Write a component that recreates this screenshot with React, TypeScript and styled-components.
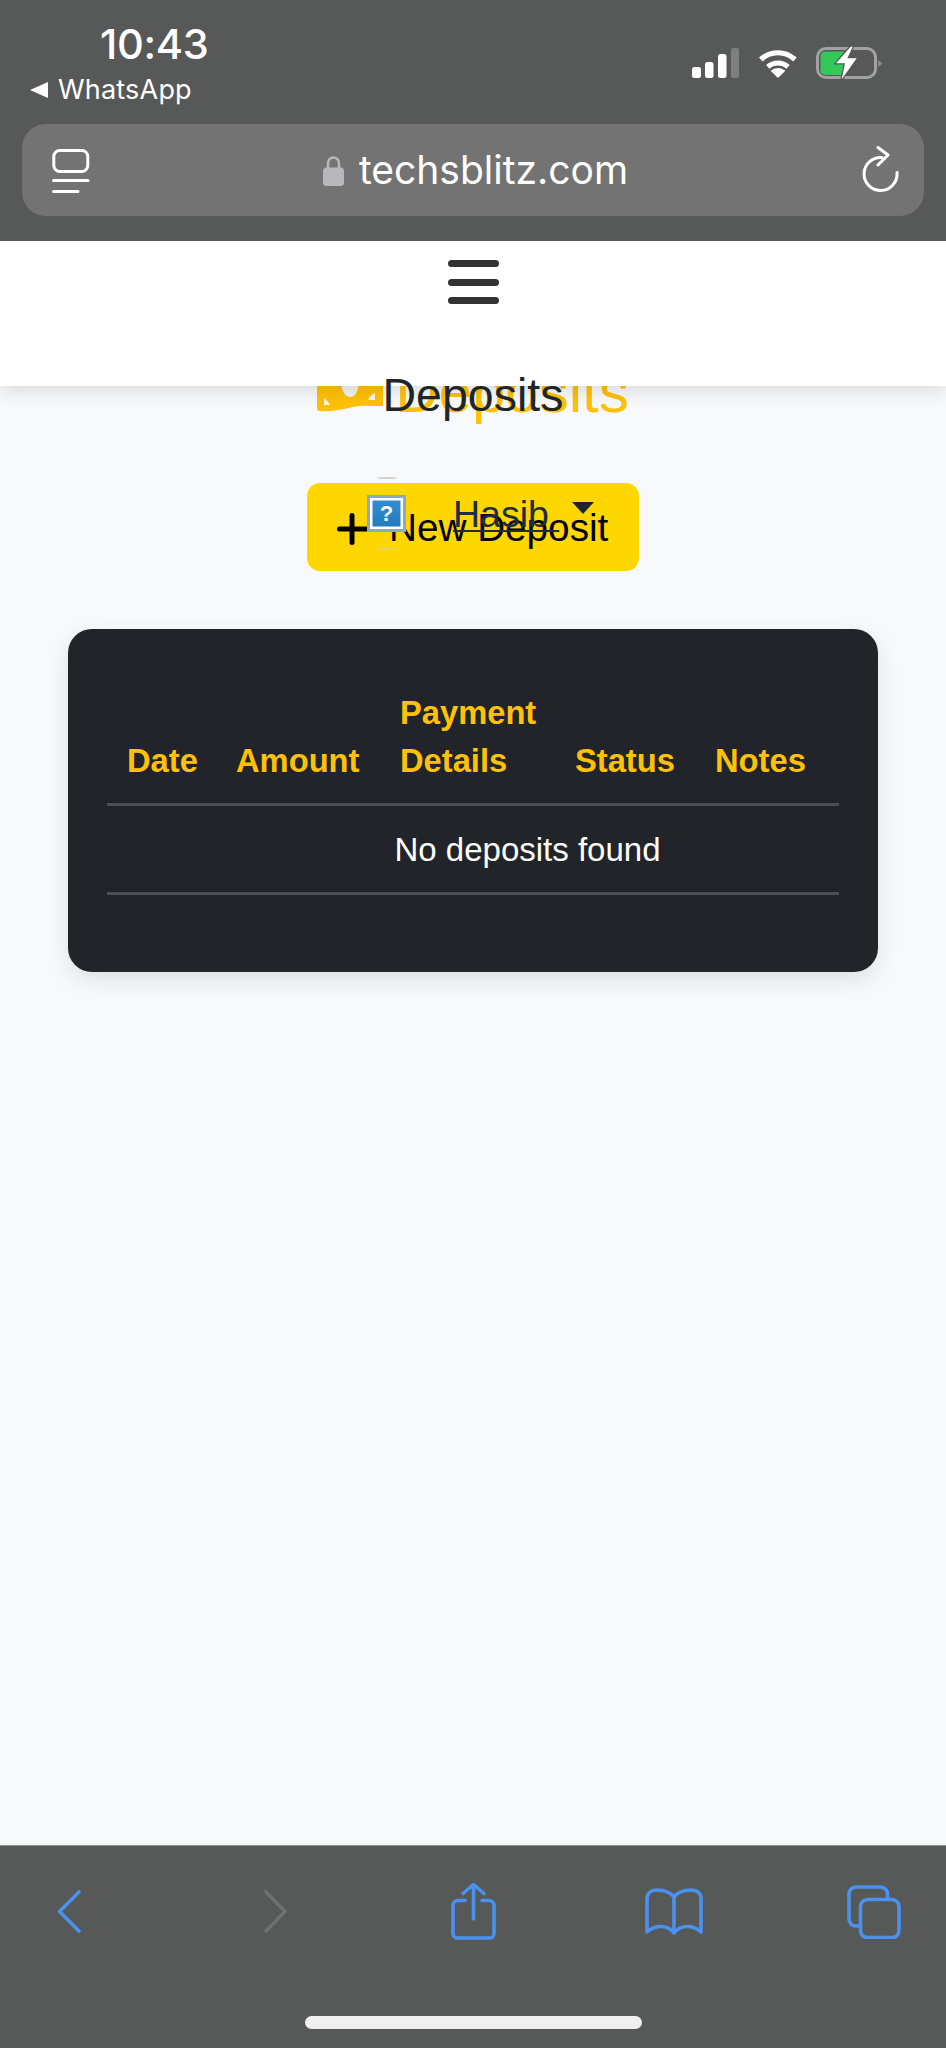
import React from "react";
import styled, { createGlobalStyle } from "styled-components";

const Global = createGlobalStyle`
  html, body { margin: 0; padding: 0; background: #f8f9fa; }
  #root { width: 946px; height: 2048px; }
  * { box-sizing: border-box; }
`;

const Page = styled.div`
  width: 946px; height: 2048px; display: flex; flex-direction: column; overflow: hidden;
  font-family: "Liberation Sans", Arial, sans-serif; background: #f8f9fa;
`;
const StatusBar = styled.header`
  height: 241px; flex: none; background: #575858; color: #fff; padding: 0 22px;
  display: flex; flex-direction: column; font-family: Inter, "Liberation Sans", sans-serif;
  position: relative; z-index: 3;
`;
const StatusRow = styled.div`
  height: 124px; display: flex; justify-content: space-between;
`;
const Clock = styled.div`display: flex; flex-direction: column; padding-top: 21px;`;
const Time = styled.div`
  font-size: 41.6px; line-height: 46px; font-weight: 500; margin-left: 78px; letter-spacing: -0.3px;
`;
const BackApp = styled.div`
  display: flex; align-items: center; gap: 10px; margin: 7px 0 0 8px;
  font-size: 27px; line-height: 32px; letter-spacing: 0.2px;
`;
const TinyArrow = styled.span`
  width: 0; height: 0; border-style: solid; border-width: 8.5px 18px 8.5px 0;
  border-color: transparent #fff transparent transparent;
`;
const Indicators = styled.div`
  display: flex; align-items: flex-start; padding: 47px 42px 0 0;
`;
const UrlBar = styled.div`
  height: 92px; border-radius: 24px; background: #727372; padding: 0 25px 0 30px;
  display: grid; grid-template-columns: 1fr auto 1fr; align-items: center;
`;
const Domain = styled.div`
  display: flex; align-items: center; gap: 15px; font-size: 39px; line-height: 48px;
`;
const TabsSlot = styled.div`display: flex; padding-top: 2px;`;
const ReloadWrap = styled.div`display: flex; justify-content: flex-end;`;

const Nav = styled.nav`
  height: 145px; flex: none; background: #fff; position: relative; z-index: 2;
  box-shadow: 0 5px 18px rgba(0,0,0,.12);
  display: flex; flex-direction: column; align-items: center; padding-top: 19px; gap: 11.5px;
`;
const BurgerBar = styled.span`
  width: 51px; height: 7px; border-radius: 3.5px; background: #333;
`;
const Main = styled.main`
  flex: 1; min-height: 0; display: flex; flex-direction: column; background: #f8f9fa;
`;
const HeadingStack = styled.div`
  display: grid; justify-items: center; margin-top: -57px; height: 125px;
`;
const YellowHeading = styled.div`
  grid-area: 1 / 1; align-self: start; display: flex; align-items: baseline; gap: 12px; color: #ffc107;
  font-size: 60px; line-height: 72px; margin-top: 9px; position: relative; z-index: 1;
`;
const DarkHeading = styled.h1`
  grid-area: 1 / 1; align-self: start; margin: 30px 0 0; font-size: 46.5px; line-height: 72px; font-weight: 400; color: #212529;
  position: relative; z-index: 3;
`;
const ActionStack = styled.div`
  display: grid; justify-items: center; margin-top: 29px; height: 88px; align-items: start;
`;
const NewButton = styled.button`
  grid-area: 1 / 1; width: 332px; height: 88px; border: 0; border-radius: 13px; background: #ffd700;
  color: #000; font: 400 38.7px/1 "Liberation Sans", Arial, sans-serif;
  display: flex; align-items: center; gap: 20px; padding: 3px 0 0 30px;
`;
const UserMenu = styled.div`
  grid-area: 1 / 1; justify-self: start; margin-left: 367px; margin-top: 12px; display: flex; align-items: flex-start;
  position: relative; z-index: 1; color: #212d3a;
`;
const BrokenAvatar = styled.span`
  position: relative; width: 39px; height: 37px; flex: none; display: flex; align-items: center; justify-content: center;
  background: linear-gradient(#3390d2, #2379bc); border: 3px solid #8fa9bd; box-shadow: inset 0 0 0 2.5px #fff;
  color: #fff; font: 700 22px/1 "Liberation Sans", Arial, sans-serif;
  &::before, &::after {
    content: ""; position: absolute; left: 7px; width: 20px; height: 2px; border-radius: 50%; background: #cfcfcf;
  }
  &::before { top: -21px; }
  &::after { bottom: -21px; background: #e6d27a; }
`;
const UserName = styled.a`
  margin-left: 47px; margin-top: -1px; font-size: 37.5px; line-height: 40px; white-space: pre;
  text-decoration: underline; text-decoration-thickness: 2px; text-underline-offset: 3px;
`;
const Caret = styled.span`
  margin-left: 13px; margin-top: 7px; width: 0; height: 0; border-style: solid; border-width: 12px 11.5px 0 11.5px;
  border-color: #212529 transparent transparent transparent;
`;
const Card = styled.section`
  margin: 58px 68px 0; height: 343px; border-radius: 24px; background: #212529; padding: 38px 39px;
  box-shadow: 0 8px 22px rgba(0,0,0,.1);
`;
const Table = styled.table`
  width: 732px; table-layout: fixed; border-collapse: collapse; font-size: 32.7px; line-height: 48px;
`;
const Th = styled.th`
  padding: 22px 20px 18px; color: #ffc107; text-align: left; vertical-align: bottom; font-weight: 700;
  border-bottom: 3px solid #495057; white-space: normal;
`;
const Td = styled.td`
  padding: 20px 20px 18px; color: #fff; border-bottom: 3px solid #495057; text-align: center; font-size: 33px;
`;
const BottomBar = styled.footer`
  height: 203px; flex: none; background: #575858; border-top: 1px solid #8d8d8d; position: relative; z-index: 3;
  display: flex; flex-direction: column;
`;
const Toolbar = styled.div`
  height: 131px; display: flex; align-items: center; padding-left: 57px;
`;
const ToolIcon = styled.svg<{ $gap?: number }>`
  flex: none; margin-left: ${(p) => p.$gap ?? 0}px; fill: none; stroke: #4a92ef; stroke-width: 3.6;
  stroke-linecap: round; stroke-linejoin: round;
`;
const DimIcon = styled(ToolIcon)`stroke: #6f7070;`;
const HomeIndicator = styled.div`
  width: 337px; height: 13px; border-radius: 7px; background: #f0f0f0; margin: 39px 0 0 305px;
`;

const Signal = () => (
  <svg width="47" height="30" viewBox="0 0 47 30" style={{ marginTop: 1 }}>
    <rect x="0" y="19" width="9" height="11" rx="2.5" fill="#fff" />
    <rect x="13" y="14" width="8.5" height="16" rx="2.5" fill="#fff" />
    <rect x="26" y="6" width="8.5" height="24" rx="2.5" fill="#fff" />
    <rect x="39" y="0" width="8" height="30" rx="2" fill="#7e7f7f" />
  </svg>
);
const Wifi = () => (
  <svg width="40" height="30" viewBox="0 0 40 30" fill="none" style={{ marginLeft: 19, marginTop: 1 }}>
    <path d="M2.8 11.5A25 25 0 0 1 37 11.5" stroke="#fff" strokeWidth="5.2" />
    <path d="M9.8 18.8A15 15 0 0 1 30 18.8" stroke="#fff" strokeWidth="5" />
    <path d="M20 30L12.6 22.8A11 11 0 0 1 27.4 22.8Z" fill="#fff" />
  </svg>
);
const Battery = () => (
  <svg width="66" height="33" viewBox="0 0 66 33" fill="none" style={{ marginLeft: 18, overflow: "visible" }}>
    <rect x="1.5" y="1.5" width="58" height="29" rx="8.5" stroke="#a2a2a2" strokeWidth="3" />
    <path d="M62 13V20Q66 17.5 66 16.5Q66 15.5 62 13Z" fill="#8b8b8b" />
    <rect x="4.5" y="4.5" width="28" height="23.5" rx="5" fill="#34c759" />
    <path d="M34.7 -0.3L20 16.3H29L25.7 32.3L40.7 11.3H31.3L36.7 -0.3Z" fill="#fff" stroke="#575858" strokeWidth="2.5" style={{ paintOrder: "stroke" }} />
  </svg>
);
const TabsGlyph = () => (
  <svg width="38" height="45" viewBox="0 0 38 45" fill="none" stroke="#fff" strokeWidth="3" strokeLinecap="round">
    <rect x="1.8" y="1.5" width="34" height="21" rx="6" />
    <path d="M1.5 31.5H36" />
    <path d="M1.5 42.5H26" />
  </svg>
);
const Lock = () => (
  <svg width="21" height="31" viewBox="0 0 21 31" fill="none">
    <path d="M5 14V8A5.5 5.5 0 0 1 16 8V14" stroke="#b7b8bb" strokeWidth="2.6" />
    <rect x="0" y="12.5" width="21" height="18.5" rx="3.5" fill="#b7b8bb" />
  </svg>
);
const Reload = () => (
  <svg width="42" height="48" viewBox="0 0 42 48" fill="none" stroke="#fff" strokeWidth="3" strokeLinecap="round" strokeLinejoin="round">
    <path d="M40 26.5A16.5 16.5 0 1 1 25 11.5" />
    <path d="M21 1.5L31 9L21 19" />
  </svg>
);
const MoneyBill = () => (
  <svg width="66" height="74" viewBox="0 0 66 74" style={{ marginBottom: -1 }}>
    <path d="M0 0H66V68C55 68 45 67 35 69C25 72 10 74 3 73C0 73 0 71 0 69Z" fill="#ffc107" />
    <ellipse cx="33" cy="46" rx="8.5" ry="13" fill="#f4f4f2" />
    <path d="M7 60C10 62 12 65 13 67H7Z" fill="#fbf6e3" />
    <path d="M58 55V62H51C52 59 55 56 58 55Z" fill="#fbf6e3" />
  </svg>
);

export default function App() {
  return (
    <Page>
      <Global />
      <StatusBar>
        <StatusRow>
          <Clock>
            <Time>10:43</Time>
            <BackApp><TinyArrow />WhatsApp</BackApp>
          </Clock>
          <Indicators><Signal /><Wifi /><Battery /></Indicators>
        </StatusRow>
        <UrlBar>
          <TabsSlot><TabsGlyph /></TabsSlot>
          <Domain><Lock />techsblitz.com</Domain>
          <ReloadWrap><Reload /></ReloadWrap>
        </UrlBar>
      </StatusBar>
      <Nav>
        <BurgerBar /><BurgerBar /><BurgerBar />
      </Nav>
      <Main>
        <HeadingStack>
          <YellowHeading><MoneyBill />Deposits</YellowHeading>
          <DarkHeading>Deposits</DarkHeading>
        </HeadingStack>
        <ActionStack>
          <NewButton>
            <svg width="32" height="32" viewBox="0 0 32 32" stroke="#000" strokeWidth="5" strokeLinecap="round">
              <path d="M2.5 16H29.5M15 2.5V29.5" />
            </svg>
            New Deposit
          </NewButton>
          <UserMenu>
            <BrokenAvatar>?</BrokenAvatar>
            <UserName>Hasib </UserName>
            <Caret />
          </UserMenu>
        </ActionStack>
        <Card>
          <Table>
            <colgroup>
              <col style={{ width: 109 }} />
              <col style={{ width: 164 }} />
              <col style={{ width: 175 }} />
              <col style={{ width: 140 }} />
              <col style={{ width: 144 }} />
            </colgroup>
            <thead>
              <tr>
                <Th>Date</Th>
                <Th>Amount</Th>
                <Th>Payment Details</Th>
                <Th>Status</Th>
                <Th>Notes</Th>
              </tr>
            </thead>
            <tbody>
              <tr>
                <Td />
                <Td colSpan={4}>No deposits found</Td>
              </tr>
            </tbody>
          </Table>
        </Card>
      </Main>
      <BottomBar>
        <Toolbar>
          <ToolIcon width="24" height="43" viewBox="0 0 24 43"><path d="M22 2L2.5 21.5L22 41" /></ToolIcon>
          <DimIcon $gap={183} width="23" height="43" viewBox="0 0 23 43"><path d="M2 2L21 21.5L2 41" /></DimIcon>
          <ToolIcon $gap={164} width="45" height="57" viewBox="0 0 45 57">
            <path d="M14 17.5H7A5 5 0 0 0 2 22.5V50.5A4.5 4.5 0 0 0 6.5 55H38.5A4.5 4.5 0 0 0 43 50.5V22.5A5 5 0 0 0 38 17.5H31" />
            <path d="M22.5 36V2M12 10.5L22.5 1.5L33 10.5" />
          </ToolIcon>
          <ToolIcon $gap={149} width="58" height="47" viewBox="0 0 58 47">
            <path d="M29 9C25 4 18 2 12 2C6 2 2 5 2 11V44C10 37 22 36 29 45C36 36 48 37 56 44V11C56 5 52 2 46 2C40 2 33 4 29 9V45" />
          </ToolIcon>
          <ToolIcon $gap={144} width="54" height="54" viewBox="0 0 54 54">
            <path d="M40.5 13V9A7 7 0 0 0 33.5 2H9A7 7 0 0 0 2 9V34A7 7 0 0 0 9 41H12" />
            <rect x="13.5" y="14.5" width="38.5" height="38" rx="7" />
          </ToolIcon>
        </Toolbar>
        <HomeIndicator />
      </BottomBar>
    </Page>
  );
}
